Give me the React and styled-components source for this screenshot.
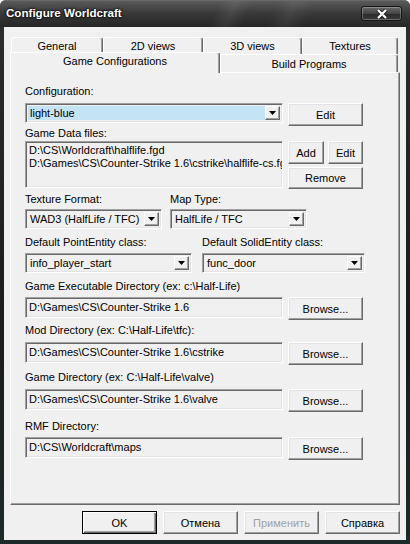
import styled, { createGlobalStyle } from "styled-components";

const GlobalStyle = createGlobalStyle`
  html, body {
    margin: 0;
    padding: 0;
    background: #ffffff;
  }
  body {
    font-family: "Liberation Sans", Arial, sans-serif;
    font-size: 11px;
    color: #000000;
  }
`;

const Frame = styled.div`
  width: 410px;
  height: 544px;
  box-sizing: border-box;
  display: flex;
  flex-direction: column;
  background: linear-gradient(180deg, #4c4c4c 0, #2c2c2c 27px, #1b1b1b 60%, #1d2a2a 100%);
  border-radius: 6px 6px 0 0;
  overflow: hidden;
`;

const TitleBar = styled.div`
  height: 27px;
  flex: none;
  display: flex;
  align-items: center;
  justify-content: space-between;
  padding: 0 8px 3px 6px;
  box-sizing: border-box;
  background:
    linear-gradient(115deg, transparent 52%, rgba(255, 255, 255, 0.07) 56%, transparent 60%,
      transparent 66%, rgba(255, 255, 255, 0.06) 70%, transparent 75%),
    linear-gradient(180deg, #5a5a5a 0, #3a3a3a 45%, #262626 100%);
  border-top: 1px solid #6a6a6a;
`;

const Title = styled.span`
  font-family: "Liberation Sans", Arial, sans-serif;
  font-weight: bold;
  font-size: 11.6px;
  color: #ffffff;
  text-shadow: 0 0 3px #000, 0 0 2px #000;
`;

const CloseButton = styled.div`
  width: 41px;
  height: 15px;
  box-sizing: border-box;
  margin-top: 2px;
  border: 1px solid #151515;
  border-radius: 3px;
  background: linear-gradient(180deg, #6a6a6a 0, #444 50%, #2a2a2a 51%, #3a3a3a 100%);
  box-shadow: inset 0 0 0 1px rgba(255, 255, 255, 0.25);
  display: flex;
  align-items: center;
  justify-content: center;
`;

const Client = styled.div`
  flex: 1;
  margin: 0 4px 4px 4px;
  background: #f0f0f0;
  padding: 10px 6px 0 6px;
  box-sizing: border-box;
  display: flex;
  flex-direction: column;
`;

const TabHeader = styled.div`
  width: 390px;
  height: 35px;
  display: flex;
  flex-direction: column;
`;

const TabRow = styled.div`
  display: flex;
  height: ${(p) => p.$height}px;
  margin-left: ${(p) => p.$indent}px;
  align-items: flex-start;
`;

const Tab = styled.div`
  width: ${(p) => p.$width}px;
  height: ${(p) => (p.$active ? 21 : p.$height)}px;
  margin-top: ${(p) => (p.$active ? -2 : 0)}px;
  box-sizing: border-box;
  position: relative;
  z-index: ${(p) => (p.$active ? 1 : 0)};
  background: #f0f0f0;
  border-top: 1px solid #ffffff;
  border-left: 1px solid #ffffff;
  border-right: 1px solid #696969;
  border-radius: 2px 3px 0 0;
  box-shadow: inset -1px 0 0 #a0a0a0;
  padding-top: ${(p) => p.$pad}px;
  text-align: center;
  line-height: 13px;
  font-size: 11px;
  white-space: nowrap;
`;

const Panel = styled.div`
  width: 390px;
  height: 433px;
  box-sizing: border-box;
  border-top: 1px solid #ffffff;
  border-left: 1px solid #ffffff;
  border-right: 1px solid #696969;
  border-bottom: 1px solid #696969;
  box-shadow: inset -1px -1px 0 #a0a0a0;
  padding: 12px 36px 0 14px;
  display: flex;
  flex-direction: column;
`;

const Label = styled.div`
  line-height: 13px;
  height: 13px;
  margin-top: ${(p) => p.$top || 0}px;
  margin-bottom: ${(p) => p.$gap || 0}px;
  white-space: nowrap;
`;

const ControlRow = styled.div`
  display: grid;
  grid-template-columns: 258px 75px;
  column-gap: 5px;
  align-items: start;
`;

const PairRow = styled.div`
  display: grid;
  grid-template-columns: ${(p) => p.$cols};
  column-gap: ${(p) => p.$gap}px;
  margin-top: ${(p) => p.$top}px;
`;

const Column = styled.div`
  display: flex;
  flex-direction: column;
`;

const Sunken = styled.div`
  box-sizing: border-box;
  height: ${(p) => p.$height}px;
  border: 1px solid;
  border-color: #a0a0a0 #ffffff #ffffff #a0a0a0;
  box-shadow: inset 1px 1px 0 #696969, inset -1px -1px 0 #e3e3e3;
  background: #f0f0f0;
`;

const TextField = styled(Sunken)`
  padding: 2px 0 0 3px;
  line-height: 15px;
  white-space: nowrap;
  overflow: hidden;
`;

const ListBox = styled(Sunken)`
  padding: 2px 0 0 3px;
  line-height: 13px;
  white-space: nowrap;
  overflow: hidden;
`;

const Combo = styled(Sunken)`
  display: flex;
  align-items: stretch;
  padding: 2px;
`;

const ComboText = styled.div`
  flex: 1;
  background: ${(p) => (p.$selected ? "#c4e4f5" : "transparent")};
  padding-left: 2px;
  line-height: 15px;
  white-space: nowrap;
  overflow: hidden;
`;

const ArrowButton = styled.div`
  width: 15px;
  flex: none;
  box-sizing: border-box;
  border: 1px solid;
  border-color: #ffffff #696969 #696969 #ffffff;
  box-shadow: inset -1px -1px 0 #a0a0a0;
  background: #f0f0f0;
  display: flex;
  align-items: center;
  justify-content: center;
`;

const Button = styled.div`
  width: ${(p) => p.$width || 75}px;
  height: ${(p) => p.$height || 23}px;
  box-sizing: border-box;
  border: 1px solid;
  border-color: ${(p) => (p.$default ? "#000000" : "#ffffff #696969 #696969 #ffffff")};
  box-shadow: ${(p) =>
    p.$default
      ? "inset 1px 1px 0 #ffffff, inset -1px -1px 0 #696969, inset -2px -2px 0 #a0a0a0"
      : "inset -1px -1px 0 #a0a0a0, inset 1px 1px 0 #e3e3e3"};
  background: #f0f0f0;
  display: flex;
  align-items: center;
  justify-content: center;
  color: ${(p) => (p.$disabled ? "#a0a0a0" : "#000000")};
  font-size: 11px;
  white-space: nowrap;
`;

const ButtonStack = styled.div`
  display: flex;
  flex-direction: column;
  gap: 3px;
`;

const SmallButtons = styled.div`
  display: flex;
  gap: 4px;
`;

const Footer = styled.div`
  display: flex;
  justify-content: flex-end;
  gap: 6px;
  margin-top: 6px;
`;

const DropArrow = () => (
  <svg width="7" height="4" viewBox="0 0 7 4">
    <polygon points="0,0 7,0 3.5,4" fill="#000" />
  </svg>
);

const ComboBox = ({ value, selected, height = 20 }) => (
  <Combo $height={height}>
    <ComboText $selected={selected}>{value}</ComboText>
    <ArrowButton>
      <DropArrow />
    </ArrowButton>
  </Combo>
);

const DirectoryField = ({ label, value, top, gap }) => (
  <>
    <Label $top={top} $gap={gap}>
      {label}
    </Label>
    <ControlRow>
      <TextField $height={21}>{value}</TextField>
      <Button>Browse...</Button>
    </ControlRow>
  </>
);

const App = () => {
  return (
    <>
      <GlobalStyle />
      <Frame>
        <TitleBar>
          <Title>Configure Worldcraft</Title>
          <CloseButton>
            <svg width="12" height="10" viewBox="0 0 12 10">
              <path d="M2 1 L10 9 M10 1 L2 9" stroke="#222" strokeWidth="4" />
              <path d="M2 1 L10 9 M10 1 L2 9" stroke="#fff" strokeWidth="2.2" />
            </svg>
          </CloseButton>
        </TitleBar>
        <Client>
          <TabHeader>
            <TabRow $height={17} $indent={1}>
              <Tab $width={92} $height={17} $pad={2}>General</Tab>
              <Tab $width={100} $height={17} $pad={2}>2D views</Tab>
              <Tab $width={99} $height={17} $pad={2}>3D views</Tab>
              <Tab $width={96} $height={17} $pad={2}>Textures</Tab>
            </TabRow>
            <TabRow $height={18} $indent={0}>
              <Tab $width={210} $active $pad={2}>Game Configurations</Tab>
              <Tab $width={178} $height={18} $pad={3}>Build Programs</Tab>
            </TabRow>
          </TabHeader>
          <Panel>
            <Label $gap={5}>Configuration:</Label>
            <ControlRow>
              <ComboBox value="light-blue" selected />
              <Button>Edit</Button>
            </ControlRow>

            <Label $top={1} $gap={1}>Game Data files:</Label>
            <ControlRow>
              <ListBox $height={47}>
                <div>D:\CS\Worldcraft\halflife.fgd</div>
                <div>D:\Games\CS\Counter-Strike 1.6\cstrike\halflife-cs.fgd</div>
              </ListBox>
              <ButtonStack>
                <SmallButtons>
                  <Button $width={36}>Add</Button>
                  <Button $width={35}>Edit</Button>
                </SmallButtons>
                <Button $height={22}>Remove</Button>
              </ButtonStack>
            </ControlRow>

            <PairRow $cols="137px 137px" $gap={8} $top={4}>
              <Column>
                <Label $gap={3}>Texture Format:</Label>
                <ComboBox value="WAD3 (HalfLife / TFC)" />
              </Column>
              <Column>
                <Label $gap={3}>Map Type:</Label>
                <ComboBox value="HalfLife / TFC" />
              </Column>
            </PairRow>

            <PairRow $cols="167px 163px" $gap={10} $top={7}>
              <Column>
                <Label $gap={4}>Default PointEntity class:</Label>
                <ComboBox value="info_player_start" />
              </Column>
              <Column>
                <Label $gap={4}>Default SolidEntity class:</Label>
                <ComboBox value="func_door" />
              </Column>
            </PairRow>

            <DirectoryField
              label="Game Executable Directory (ex: c:\Half-Life)"
              value="D:\Games\CS\Counter-Strike 1.6"
              top={7}
              gap={4}
            />
            <DirectoryField
              label="Mod Directory (ex: C:\Half-Life\tfc):"
              value="D:\Games\CS\Counter-Strike 1.6\cstrike"
              top={4}
              gap={5}
            />
            <DirectoryField
              label="Game Directory (ex: C:\Half-Life\valve)"
              value="D:\Games\CS\Counter-Strike 1.6\valve"
              top={6}
              gap={5}
            />
            <DirectoryField
              label="RMF Directory:"
              value="D:\CS\Worldcraft\maps"
              top={8}
              gap={4}
            />
          </Panel>
          <Footer>
            <Button $default>OK</Button>
            <Button>Отмена</Button>
            <Button $disabled>Применить</Button>
            <Button>Справка</Button>
          </Footer>
        </Client>
      </Frame>
    </>
  );
};

export default App;
